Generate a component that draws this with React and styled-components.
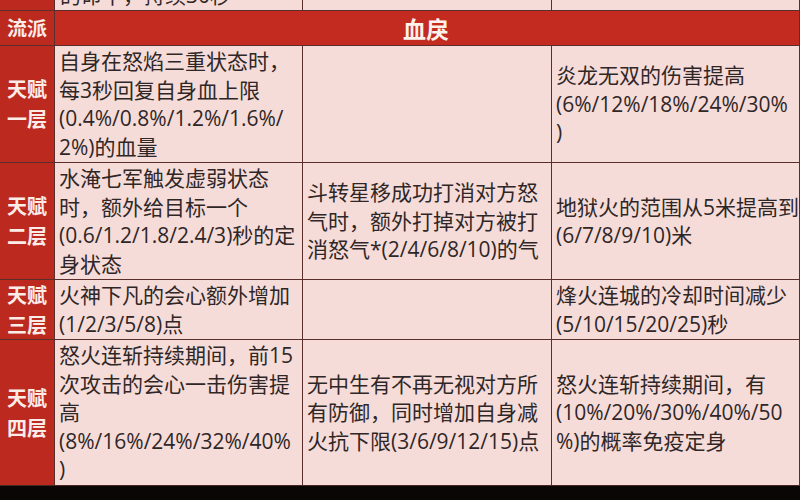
import React from 'react';
import styled, { createGlobalStyle } from 'styled-components';

const GlobalStyle = createGlobalStyle`
  html, body {
    margin: 0;
    padding: 0;
    background: #0b0606;
    overflow: hidden;
  }
  body {
    font-family: "Open Sans", "Noto Sans CJK SC", sans-serif;
  }
`;

const rows = [
  {
    label: ['天赋', '一层'],
    cells: [
      ['自身在怒焰三重状态时，', '每3秒回复自身血上限', '(0.4%/0.8%/1.2%/1.6%/', '2%)的血量'],
      [],
      ['炎龙无双的伤害提高', '(6%/12%/18%/24%/30%', ')'],
    ],
  },
  {
    label: ['天赋', '二层'],
    cells: [
      ['水淹七军触发虚弱状态', '时，额外给目标一个', '(0.6/1.2/1.8/2.4/3)秒的定', '身状态'],
      ['斗转星移成功打消对方怒', '气时，额外打掉对方被打', '消怒气*(2/4/6/8/10)的气'],
      ['地狱火的范围从5米提高到', '(6/7/8/9/10)米'],
    ],
  },
  {
    label: ['天赋', '三层'],
    cells: [
      ['火神下凡的会心额外增加', '(1/2/3/5/8)点'],
      [],
      ['烽火连城的冷却时间减少', '(5/10/15/20/25)秒'],
    ],
  },
  {
    label: ['天赋', '四层'],
    cells: [
      ['怒火连斩持续期间，前15', '次攻击的会心一击伤害提', '高', '(8%/16%/24%/32%/40%', ')'],
      ['无中生有不再无视对方所', '有防御，同时增加自身减', '火抗下限(3/6/9/12/15)点'],
      ['怒火连斩持续期间，有', '(10%/20%/30%/40%/50', '%)的概率免疫定身'],
    ],
  },
];

export default function App() {
  return (
    <>
      <GlobalStyle />
      <Sheet>
        <Side />
        <Cell $bottom>
          <Line>的命中，持续30秒</Line>
        </Cell>
        <Cell />
        <Cell />

        <Side>流派</Side>
        <Banner>血戾</Banner>

        {rows.map((row, i) => (
          <React.Fragment key={i}>
            <Side>
              {row.label.map(t => (
                <div key={t}>{t}</div>
              ))}
            </Side>
            {row.cells.map((lines, j) => (
              <Cell key={j}>
                {lines.map((t, k) => (
                  <Line key={k}>{t}</Line>
                ))}
              </Cell>
            ))}
          </React.Fragment>
        ))}
      </Sheet>
    </>
  );
}

const Sheet = styled.div`
  display: grid;
  grid-template-columns: 54px 247px 248px 247px;
  grid-template-rows: 40px 34px 116px 116px 59px 145px;
  gap: 1px;
  width: 799px;
  margin-top: -30px;
  background: #5a2f2b;
  border-right: 1px solid #5a2f2b;
  border-bottom: 1px solid #4a2623;
`;

const Side = styled.div`
  display: flex;
  flex-direction: column;
  align-items: center;
  justify-content: center;
  background: #bb291f;
  color: #fbece7;
  font-family: "Noto Sans CJK SC", sans-serif;
  font-weight: 700;
  font-size: 20px;
  line-height: 30px;
`;

const Banner = styled.div`
  grid-column: span 3;
  display: flex;
  align-items: center;
  justify-content: center;
  background: #c32b20;
  color: #fdf1ec;
  font-family: "Noto Sans CJK SC", sans-serif;
  font-weight: 700;
  font-size: 23px;
  padding-right: 2px;
`;

const Cell = styled.div`
  display: flex;
  flex-direction: column;
  justify-content: ${p => (p.$bottom ? 'flex-end' : 'center')};
  padding: ${p => (p.$bottom ? '0 0 1px 5px' : '0 0 0 4px')};
  background: #f6dcd8;
  color: #2f2727;
  font-size: 21px;
  line-height: 28.5px;
  overflow: hidden;
`;

const Line = styled.div`
  white-space: nowrap;
`;
